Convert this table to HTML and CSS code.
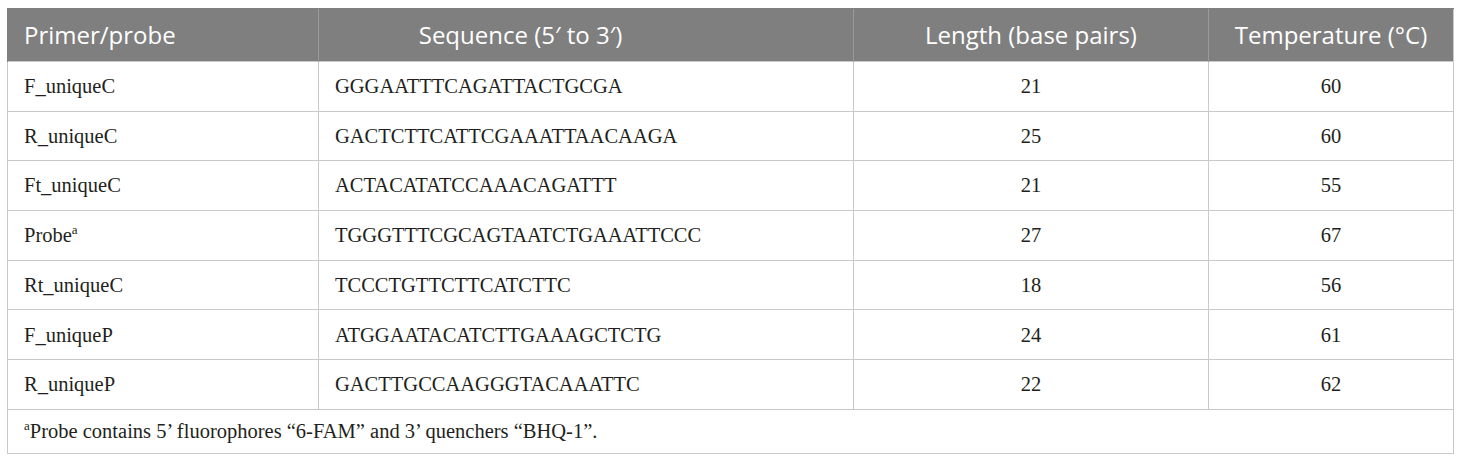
FILE: index.html
```html
<!DOCTYPE html>
<html>
<head>
<meta charset="utf-8">
<link rel="stylesheet" href="styles.css">
</head>
<body>
<table class="primers">
  <colgroup>
    <col class="c1"><col class="c2"><col class="c3"><col class="c4">
  </colgroup>
  <thead>
    <tr>
      <th class="left">Primer/probe</th>
      <th class="seq-head">Sequence (5′ to 3′)</th>
      <th>Length (base pairs)</th>
      <th>Temperature (°C)</th>
    </tr>
  </thead>
  <tbody>
    <tr><td>F_uniqueC</td><td>GGGAATTTCAGATTACTGCGA</td><td class="num">21</td><td class="num">60</td></tr>
    <tr><td>R_uniqueC</td><td>GACTCTTCATTCGAAATTAACAAGA</td><td class="num">25</td><td class="num">60</td></tr>
    <tr><td>Ft_uniqueC</td><td>ACTACATATCCAAACAGATTT</td><td class="num">21</td><td class="num">55</td></tr>
    <tr><td>Probe<sup>a</sup></td><td>TGGGTTTCGCAGTAATCTGAAATTCCC</td><td class="num">27</td><td class="num">67</td></tr>
    <tr><td>Rt_uniqueC</td><td>TCCCTGTTCTTCATCTTC</td><td class="num">18</td><td class="num">56</td></tr>
    <tr><td>F_uniqueP</td><td>ATGGAATACATCTTGAAAGCTCTG</td><td class="num">24</td><td class="num">61</td></tr>
    <tr><td>R_uniqueP</td><td>GACTTGCCAAGGGTACAAATTC</td><td class="num">22</td><td class="num">62</td></tr>
  </tbody>
  <tfoot>
    <tr><td colspan="4" class="foot"><sup>a</sup>Probe contains 5’ fluorophores “6-FAM” and 3’ quenchers “BHQ-1”.</td></tr>
  </tfoot>
</table>
</body>
</html>
```

FILE: styles.css
```css
html, body {
  background: #ffffff;
}
body {
  margin: 8px 0 0 7px;
}
.primers {
  width: 1446px;
  border-collapse: collapse;
  table-layout: fixed;
  border: 1px solid #c9c9c9;
}
.c1 { width: 311px; }
.c2 { width: 535px; }
.c3 { width: 355px; }
.c4 { width: 245px; }
.primers th {
  background: #7f7f7f;
  color: #ffffff;
  font-family: "Open Sans", sans-serif;
  font-weight: 400;
  font-size: 24px;
  line-height: 1;
  height: 52px;
  padding: 0 16px;
  text-align: center;
  border-left: 1px solid #9a9a9a;
  border-top: 1px solid #7f7f7f;
  white-space: nowrap;
}
.primers th.left {
  text-align: left;
  border-left: 1px solid #7f7f7f;
}
.primers th.seq-head {
  padding-right: 147px;
}
.primers td {
  font-family: "Liberation Serif", "Times New Roman", serif;
  font-size: 20.5px;
  line-height: 1;
  color: #231f20;
  height: 48.7px;
  padding: 0 16px;
  border: 1px solid #c9c9c9;
  white-space: nowrap;
}
.primers td.num {
  text-align: center;
}
.primers td.foot {
  height: 43px;
}
.primers sup {
  font-size: 13px;
  vertical-align: 8px;
  line-height: 0;
}
```
